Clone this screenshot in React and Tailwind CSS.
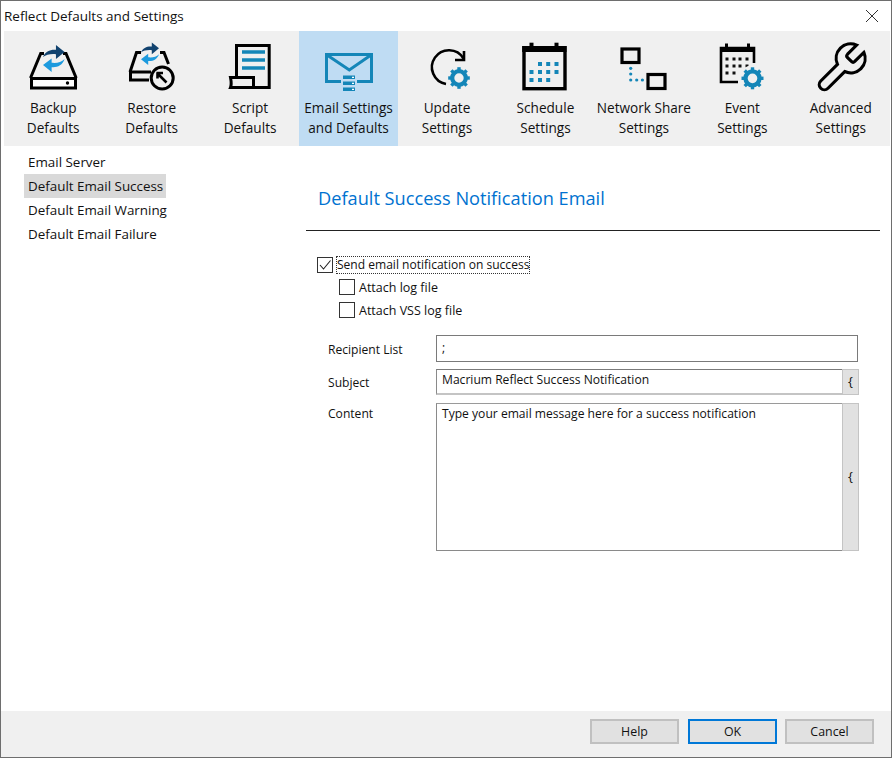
import React from "react";

const BLUE = "#1486b8";
const Svg = ({ children }) => (
  <svg width="56" height="56" viewBox="0 0 56 56" fill="none" className="block">
    {children}
  </svg>
);

const Gear = ({ cx, cy, r = 8, color = BLUE }) => (
  <g>
    <circle cx={cx} cy={cy} r={r} stroke={color} strokeWidth={r * 0.62} />
    {[0, 45, 90, 135, 180, 225, 270, 315].map((a) => (
      <rect key={a} x={cx - 1.7} y={cy - r - 4} width="3.4" height="4" fill={color} transform={`rotate(${a} ${cx} ${cy})`} />
    ))}
  </g>
);

const Arrows = ({ x, y, s = 1 }) => (
  <g transform={`translate(${x} ${y}) scale(${s})`}>
    <path d="M0 11 C2 6 7 4 12 4.5 L12 0 L20 6.5 L12 13 L12 8.5 C7 8 3 9 0 11Z" fill="#12436f" />
    <path d="M20 13 C18 19 13 21 8 20.5 L8 25 L0 18.5 L8 12.5 L8 16.5 C13 17 17 16 20 13Z" fill="#1c9ade" />
  </g>
);

const Dots = ({ pts, size, fill }) =>
  pts.map(([x, y]) => <rect key={`${x}-${y}`} x={x - size / 2} y={y - size / 2} width={size} height={size} fill={fill} />);

const icons = [
  <Svg>
    <path d="M19 14.5 L15.7 14.5 L5.5 39 M38 14.5 L41 14.5 L51.2 39" stroke="#000" strokeWidth="3" />
    <rect x="6.5" y="39.5" width="44" height="9.5" stroke="#000" strokeWidth="3" fill="#fff" />
    <circle cx="42.5" cy="44" r="1.7" fill="#000" />
    <Arrows x="18" y="6" s="1.08" />
  </Svg>,
  <Svg>
    <path d="M17 13.5 L12.5 13.5 L6 33 M36 13.5 L40 13.5 L44.5 25" stroke="#000" strokeWidth="3" />
    <path d="M27 33 L6.5 33 L6.5 41 L25 41" stroke="#000" strokeWidth="3" />
    <circle cx="38.2" cy="39" r="11" stroke="#000" strokeWidth="3" fill="#f0f0f0" />
    <path d="M33.5 34.5 L42.5 43.5 M33.5 33.5 L33.5 39.5 M32.5 34 L39 34" stroke="#000" strokeWidth="2.6" />
    <Arrows x="17" y="3.5" s="0.9" />
  </Svg>,
  <Svg>
    <path d="M14.5 37 L14.5 6.5 L47.2 6.5 L47.2 48.5 L20 48.5" stroke="#000" strokeWidth="3" />
    <path d="M8.5 48.5 C9.5 46 9 41 8.5 38.5 L31.5 38.5 L31.5 48.5 Z" stroke="#000" strokeWidth="3" fill="#f0f0f0" />
    <path d="M20 13 H43 M20 21 H43 M20 29 H43" stroke={BLUE} strokeWidth="3.4" />
  </Svg>,
  <Svg>
    <path d="M20 42.5 L5.5 42.5 L5.5 15.5 L50.5 15.5 L50.5 42.5 L36 42.5" stroke={BLUE} strokeWidth="3" />
    <path d="M6 16 L28.3 31 L50 16" stroke={BLUE} strokeWidth="3" />
    <path d="M22 38.3 H34 M22 44.3 H34 M22 50.3 H34" stroke={BLUE} strokeWidth="3.4" />
    <path d="M31 38.3 H33 M31 44.3 H33 M31 50.3 H33" stroke="#fff" strokeWidth="1.2" />
  </Svg>,
  <Svg>
    <path d="M44.5 19.5 A17 17 0 1 0 27 45" stroke="#000" strokeWidth="2.6" />
    <path d="M36 21 L45 21 L45 12" stroke="#000" strokeWidth="2.6" />
    <circle cx="40" cy="39" r="12" fill="#f0f0f0" />
    <Gear cx="40" cy="39" r="6.8" />
  </Svg>,
  <Svg>
    <rect x="7" y="8.7" width="41" height="41" stroke="#000" strokeWidth="3.4" />
    <rect x="5.2" y="7" width="44.3" height="6" fill="#000" />
    <rect x="12.5" y="3.7" width="4" height="7" fill="#000" />
    <rect x="37.5" y="3.7" width="4" height="7" fill="#000" />
    <Dots size={4} fill={BLUE} pts={[[23, 25], [31.2, 25], [39.5, 25], [14.5, 33], [23, 33], [31.2, 33], [39.5, 33], [14.5, 41], [23, 41], [31.2, 41]]} />
  </Svg>,
  <Svg>
    <rect x="6" y="10" width="17" height="13.5" stroke="#000" strokeWidth="3.2" />
    <rect x="32" y="35.5" width="17" height="14" stroke="#000" strokeWidth="3.2" />
    {[[14.7, 29.3], [14.7, 35], [14.7, 41], [20.7, 41], [26.4, 41]].map(([x, y]) => (
      <circle key={`${x}-${y}`} cx={x} cy={y} r="1.6" fill={BLUE} />
    ))}
  </Svg>,
  <Svg>
    <path d="M24 43 L7 43 L7 9 L40 9 L40 24" stroke="#000" strokeWidth="2.6" />
    <rect x="6" y="8" width="35" height="5" fill="#000" />
    <rect x="11" y="4.5" width="3" height="6" fill="#000" />
    <rect x="33" y="4.5" width="3" height="6" fill="#000" />
    <Dots size={3} fill="#111" pts={[[13, 20], [20, 20], [26, 20], [33, 20], [13, 27], [20, 27], [26, 27], [33, 27], [13, 34], [20, 34]]} />
    <circle cx="38.5" cy="39.3" r="13" fill="#f0f0f0" />
    <Gear cx="38.5" cy="39.3" r="7" />
  </Svg>,
  <svg width="58" height="58" viewBox="0 0 24 24" fill="none" className="block shrink-0">
    <path
      d="M14.7 6.3a1 1 0 0 0 0 1.4l1.6 1.6a1 1 0 0 0 1.4 0l3.77-3.77a6 6 0 0 1-7.94 7.94l-6.91 6.91a2.12 2.12 0 0 1-3-3l6.91-6.91a6 6 0 0 1 7.94-7.94l-3.76 3.76z"
      stroke="#000"
      strokeWidth="1.3"
    />
  </svg>,
];

const tools = [
  ["Backup", "Defaults"],
  ["Restore", "Defaults"],
  ["Script", "Defaults"],
  ["Email Settings", "and Defaults"],
  ["Update", "Settings"],
  ["Schedule", "Settings"],
  ["Network Share", "Settings"],
  ["Event", "Settings"],
  ["Advanced", "Settings"],
];

const side = ["Email Server", "Default Email Success", "Default Email Warning", "Default Email Failure"];

const Check = ({ checked }) => (
  <span className="w-4 h-4 shrink-0 border border-[#333] bg-white flex items-center justify-center">
    {checked && (
      <svg width="14" height="14" viewBox="0 0 14 14" fill="none">
        <path d="M2 7 L5.5 11 L12.5 2.5" stroke="#222" strokeWidth="1.1" />
      </svg>
    )}
  </span>
);

const Btn = ({ children, focus }) => (
  <div className={`w-[89px] h-[25px] pt-px flex items-center justify-center bg-[#e1e1e1] text-[#111] text-[12.4px] ${focus ? "border-2 border-[#0078d7]" : "border-2 border-[#c0c0c0]"}`}>
    {children}
  </div>
);

export default function App() {
  return (
    <div className="w-[892px] h-[758px] flex flex-col bg-white border border-[#6e6e6e] text-[#111] font-['Open_Sans','Noto_Sans',sans-serif] overflow-hidden">
      <div className="h-[30px] shrink-0 flex items-center justify-between pl-[3px] pr-[12px] text-[13.5px]">
        <span>Reflect Defaults and Settings</span>
        <svg width="14" height="14" viewBox="0 0 14 14" fill="none">
          <path d="M1 1 L13 13 M13 1 L1 13" stroke="#333" strokeWidth="1" />
        </svg>
      </div>

      <div className="h-[115px] shrink-0 ml-[3px] mr-px grid grid-cols-9 bg-[#f0f0f0]">
        {tools.map((t, i) => (
          <div key={t[0]} className={`flex flex-col items-center pt-2 ${i === 3 ? "bg-[#bfdcf3]" : ""}`}>
            <div className="w-[56px] h-[59px] flex items-start justify-center">{icons[i]}</div>
            <div className="text-center text-[13.6px] leading-[20px] whitespace-nowrap">
              <div>{t[0]}</div>
              <div>{t[1]}</div>
            </div>
          </div>
        ))}
      </div>

      <div className="flex-1 flex min-h-0">
        <div className="w-[305px] shrink-0 pt-1 pl-[23px] text-[13.4px]">
          {side.map((s, i) => (
            <div key={s} className={`h-6 w-[142px] pl-[4px] flex items-center whitespace-nowrap ${i === 1 ? "bg-[#d9d9d9]" : ""}`}>
              {s}
            </div>
          ))}
        </div>

        <div className="flex-1 flex flex-col pr-[26px]">
          <div className="h-[85px] shrink-0 border-b border-[#222] flex items-center pl-3 pt-[22px] text-[18.2px] text-[#0072d0]">
            Default Success Notification Email
          </div>
          <div className="pl-[11px] pt-[25px] text-[12.5px]">
            <div className="flex items-center h-[18px] gap-[3px]">
              <Check checked />
              <span className="h-[18px] pt-px w-[194px] border border-dotted border-[#333] flex items-center whitespace-nowrap text-[12.05px]">Send email notification on success</span>
            </div>
            <div className="pl-[22px] mt-[4px] flex items-center gap-[4px] h-[18px]">
              <Check />
              <span className="pt-[2px]">Attach log file</span>
            </div>
            <div className="pl-[22px] mt-[5px] flex items-center gap-[4px] h-[18px]">
              <Check />
              <span className="pt-[2px]">Attach VSS log file</span>
            </div>
          </div>
          <div className="pl-[22px] mt-4 text-[12.1px] w-[574px]">
            <div className="flex h-[27px]">
              <div className="w-[108px] flex items-center pt-[3px]">Recipient List</div>
              <div className="w-[422px] border border-[#7a7a7a] pl-[5px] flex items-center">;</div>
            </div>
            <div className="flex h-[26px] mt-[7px]">
              <div className="w-[108px] flex items-center pt-[2px]">Subject</div>
              <div className="w-[406px] border-t border-t-[#7a7a7a] border-l border-l-[#8a8a8a] border-b-2 border-b-[#c4c4c4] pl-[5px] leading-[20px] whitespace-nowrap">Macrium Reflect Success Notification</div>
              <div className="w-[17px] bg-[#e1e1e1] border border-[#c4c4c4] flex items-center justify-center text-[13px]">{"{"}</div>
            </div>
            <div className="flex h-[148px] mt-2">
              <div className="w-[108px] pt-[2px]">Content</div>
              <div className="w-[406px] border-t border-t-[#9a9a9a] border-l border-l-[#8a8a8a] border-b border-b-[#8a8a8a] pl-[5px] pt-px">Type your email message here for a success notification</div>
              <div className="w-[17px] bg-[#e1e1e1] border border-[#c4c4c4] flex items-center justify-center text-[13px]">{"{"}</div>
            </div>
          </div>
        </div>
      </div>

      <div className="h-[46px] shrink-0 bg-[#f0f0f0] flex items-start justify-end gap-2 pr-[17px] pt-2">
        <Btn>Help</Btn>
        <div className="ml-px">
          <Btn focus>OK</Btn>
        </div>
        <Btn>Cancel</Btn>
      </div>
    </div>
  );
}
